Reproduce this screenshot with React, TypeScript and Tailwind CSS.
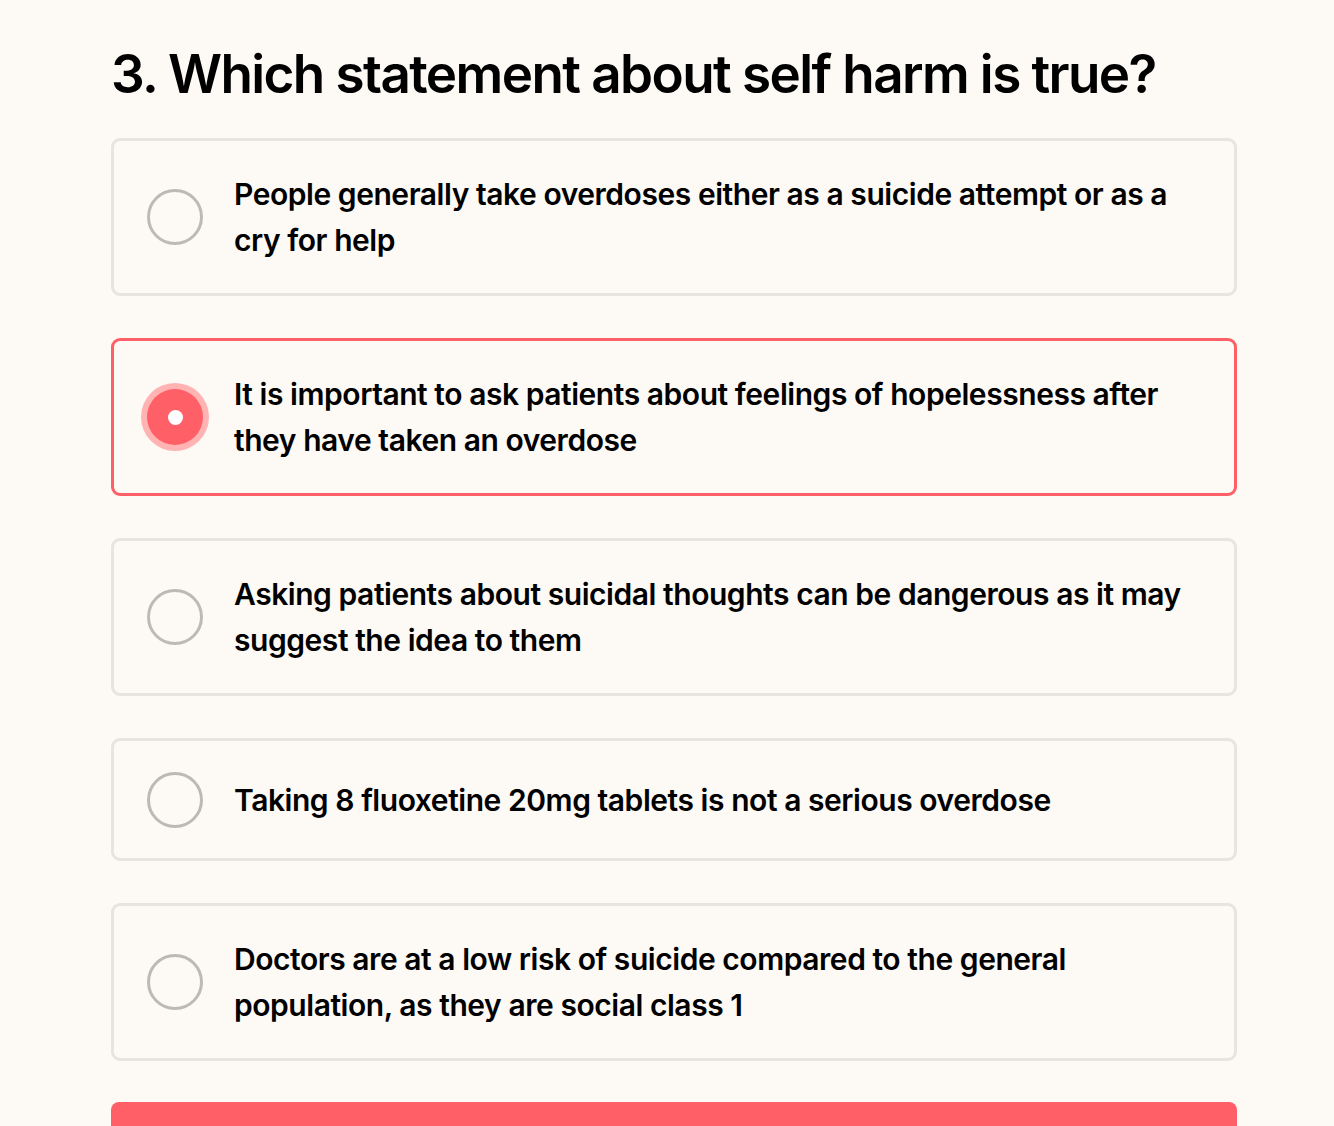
import React from "react";

const options = [
  "People generally take overdoses either as a suicide attempt or as a cry for help",
  "It is important to ask patients about feelings of hopelessness after they have taken an overdose",
  "Asking patients about suicidal thoughts can be dangerous as it may suggest the idea to them",
  "Taking 8 fluoxetine 20mg tablets is not a serious overdose",
  "Doctors are at a low risk of suicide compared to the general population, as they are social class 1",
];

export default function App() {
  const selected = 1;
  return (
    <div className="h-[1126px] overflow-hidden bg-[#fdf9f5] pl-[111px] pr-[97px] pt-[40px]" style={{ fontFamily: "Inter, 'Noto Sans', sans-serif" }}>
      <h1 className="text-[53px] font-semibold leading-[68px] tracking-[-0.03em] text-black">
        3. Which statement about self harm is true?
      </h1>
      <div className="mt-[30px] flex flex-col gap-[42px]">
        {options.map((t, i) => {
          const sel = i === selected;
          return (
            <div
              key={i}
              className={`flex min-h-[123px] items-center rounded-[9px] border-[3px] pl-[33px] pr-[40px] py-[30px] ${sel ? "border-[#ff5f66]" : "border-[#e8e4df]"}`}
            >
              {sel ? (
                <div className="flex h-[68px] w-[68px] shrink-0 items-center justify-center rounded-full bg-[#ffb3b3] -ml-[6px] -my-[6px] mr-[25px]">
                  <div className="flex h-[56px] w-[56px] items-center justify-center rounded-full bg-[#ff5f66]">
                    <div className="h-[15px] w-[15px] rounded-full bg-white" />
                  </div>
                </div>
              ) : (
                <div className="h-[56px] w-[56px] shrink-0 rounded-full border-[3px] border-[#bdbab6] mr-[31px]" />
              )}
              <p className="text-[30px] font-semibold leading-[46px] tracking-[-0.015em] text-black">{t}</p>
            </div>
          );
        })}
      </div>
      <div className="mt-[41px] h-[60px] rounded-t-[8px] bg-[#ff5f66]" />
    </div>
  );
}
